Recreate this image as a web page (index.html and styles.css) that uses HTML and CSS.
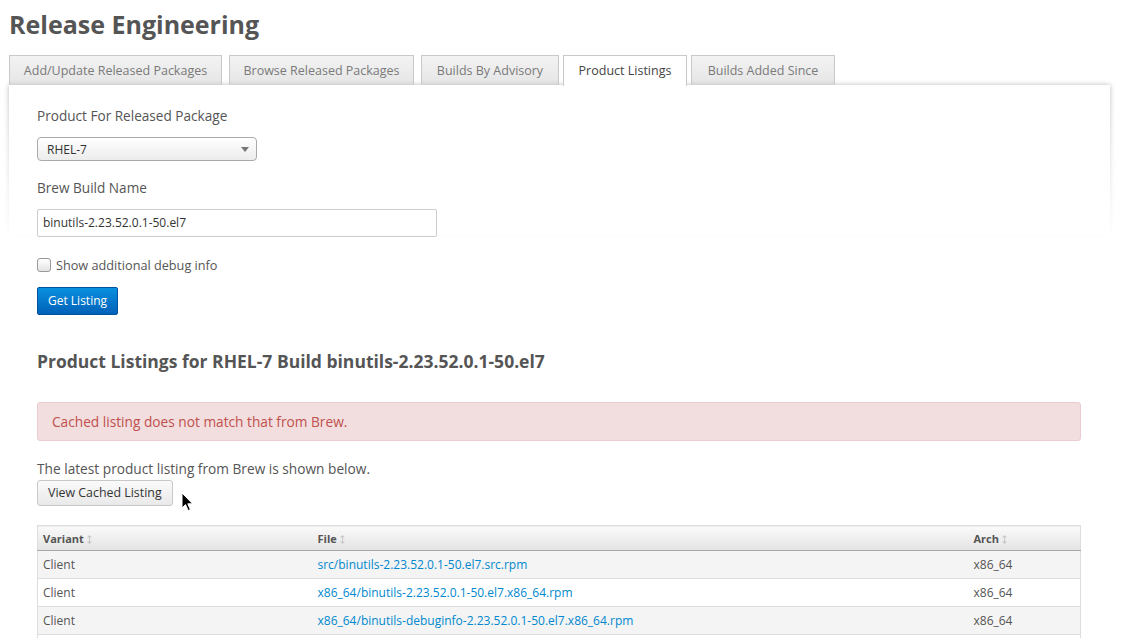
FILE: index.html
```html
<!DOCTYPE html>
<html>
<head>
<meta charset="utf-8">
<link rel="stylesheet" href="styles.css">
</head>
<body>
<div class="page">
  <h1 class="title">Release Engineering</h1>
  <ul class="tabs">
    <li class="tab t1">Add/Update Released Packages</li>
    <li class="tab t2">Browse Released Packages</li>
    <li class="tab t3 tight">Builds By Advisory</li>
    <li class="tab t4 tight active">Product Listings</li>
    <li class="tab t5">Builds Added Since</li>
  </ul>
  <div class="panel">
    <div class="panel-shadow"><div class="panel-shadow-inner"></div></div>
    <div class="panel-body">
      <label class="field-label">Product For Released Package</label>
      <div class="select">
        <span>RHEL-7</span>
        <svg class="caret" width="8" height="5" viewBox="0 0 8 5"><path d="M0 0H8L4 5Z" fill="#777"/></svg>
      </div>
      <label class="field-label">Brew Build Name</label>
      <div class="input">binutils-2.23.52.0.1-50.el7</div>
      <div class="check-row">
        <span class="checkbox"></span>
        <span class="check-label">Show additional debug info</span>
      </div>
      <div class="btn-primary">Get Listing</div>

      <h2 class="section-title">Product Listings for RHEL-7 Build binutils-2.23.52.0.1-50.el7</h2>

      <div class="alert">Cached listing does not match that from Brew.</div>

      <p class="note">The latest product listing from Brew is shown below.</p>
      <div class="btn-wrap">
        <div class="btn-default">View Cached Listing</div>
        <svg class="cursor" width="13" height="20" viewBox="0 0 13 20"><path d="M1 1V16L4.5 12.6L7.2 18.6L9.4 17.6L6.8 11.8H11.6Z" fill="#000" stroke="#fff" stroke-width="1"/></svg>
      </div>

      <table class="listing">
        <thead>
          <tr>
            <th class="c-var">Variant<svg class="sort" width="5" height="9" viewBox="0 0 5 9"><path d="M2.5 0L5 2.5H3V6.5H5L2.5 9L0 6.5H2V2.5H0Z" fill="#c8c8c8"/></svg></th>
            <th class="c-file">File<svg class="sort" width="5" height="9" viewBox="0 0 5 9"><path d="M2.5 0L5 2.5H3V6.5H5L2.5 9L0 6.5H2V2.5H0Z" fill="#c8c8c8"/></svg></th>
            <th class="c-arch">Arch<svg class="sort" width="5" height="9" viewBox="0 0 5 9"><path d="M2.5 0L5 2.5H3V6.5H5L2.5 9L0 6.5H2V2.5H0Z" fill="#c8c8c8"/></svg></th>
          </tr>
        </thead>
        <tbody>
          <tr class="odd"><td>Client</td><td><a>src/binutils-2.23.52.0.1-50.el7.src.rpm</a></td><td>x86_64</td></tr>
          <tr><td>Client</td><td><a>x86_64/binutils-2.23.52.0.1-50.el7.x86_64.rpm</a></td><td>x86_64</td></tr>
          <tr class="odd"><td>Client</td><td><a>x86_64/binutils-debuginfo-2.23.52.0.1-50.el7.x86_64.rpm</a></td><td>x86_64</td></tr>
          <tr><td>Client</td><td><a>x86_64/binutils-devel-2.23.52.0.1-50.el7.x86_64.rpm</a></td><td>x86_64</td></tr>
        </tbody>
      </table>
    </div>
  </div>
</div>
</body>
</html>
```

FILE: styles.css
```css
html, body {
  margin: 0;
  padding: 0;
  background: #fff;
  overflow: hidden;
}
body {
  font-family: "Open Sans", "DejaVu Sans", sans-serif;
  color: #555;
  font-size: 13.6px;
}
.page {
  padding: 0 11px 0 9px;
}
.title {
  margin: 0;
  padding-top: 7px;
  height: 55px;
  line-height: 34px;
  font-size: 25px;
  font-weight: 700;
  color: #555;
  box-sizing: border-box;
}
.tabs {
  list-style: none;
  margin: 0;
  padding: 0;
  display: flex;
  height: 30px;
  position: relative;
  z-index: 2;
}
.tab {
  height: 30px;
  box-sizing: border-box;
  border: 1px solid #c9c9c9;
  border-bottom: none;
  padding: 0;
  text-align: center;
  white-space: nowrap;
  margin-right: 7px;
  line-height: 29px;
  font-size: 12.5px;
  color: #7a7a7a;
  background: linear-gradient(#f3f3f3, #e5e5e5);
  box-shadow: inset 0 -4px 4px -3px rgba(0,0,0,0.12);
}
.t1 { width: 213px; }
.t2 { width: 185px; }
.t3 { width: 138px; }
.t4 { width: 124px; }
.t5 { width: 144px; }
.tab.tight {
  margin-right: 4px;
}
.tab.active {
  background: #fff;
  color: #444;
  box-shadow: none;
  height: 31px;
}
.panel {
  position: relative;
  background: #fff;
}
.panel-shadow {
  position: absolute;
  top: -8px;
  left: -8px;
  right: -8px;
  height: 150px;
  padding: 8px;
  -webkit-mask-image: linear-gradient(#000 10%, transparent);
  mask-image: linear-gradient(#000 10%, transparent);
  z-index: 1;
  pointer-events: none;
}
.panel-shadow-inner {
  height: 100%;
  box-shadow: 0 0 5px rgba(0,0,0,0.28);
}
.panel-body {
  position: relative;
  z-index: 1;
  padding: 22px 29px 0 28px;
}
.field-label {
  display: block;
  font-size: 13.6px;
  line-height: 18px;
  color: #555;
  margin-bottom: 12px;
}
.select {
  width: 220px;
  height: 24px;
  box-sizing: border-box;
  border: 1px solid #aaa;
  border-radius: 4px;
  background: linear-gradient(#fff, #ececec);
  display: flex;
  align-items: center;
  justify-content: space-between;
  padding: 0 7px 0 9px;
  font-size: 12px;
  color: #333;
  margin-bottom: 18px;
}
.caret {
  display: block;
}
.input {
  width: 400px;
  height: 28px;
  box-sizing: border-box;
  border: 1px solid #ccc;
  border-radius: 2px;
  padding: 0 5px;
  line-height: 26px;
  font-size: 12px;
  color: #333;
  margin-bottom: 20px;
}
.check-row {
  display: flex;
  align-items: center;
  gap: 5px;
  height: 16px;
  margin-bottom: 14px;
}
.checkbox {
  width: 12px;
  height: 12px;
  border: 1px solid #999;
  border-radius: 3px;
  background: linear-gradient(#fff, #e4e4e4);
}
.check-label {
  font-size: 12.7px;
  color: #555;
}
.btn-primary {
  display: inline-block;
  height: 28px;
  box-sizing: border-box;
  padding: 0 10px;
  line-height: 26px;
  border: 1px solid #00539b;
  border-radius: 2px;
  background: linear-gradient(#0a8fe0, #0062b8);
  color: #fff;
  font-size: 12px;
}
.section-title {
  margin: 0;
  padding-top: 33px;
  font-size: 17.5px;
  line-height: 26px;
  font-weight: 700;
  color: #555;
}
.alert {
  margin-top: 28px;
  height: 39px;
  box-sizing: border-box;
  background: #f2dede;
  border: 1px solid #ebccd1;
  border-radius: 3px;
  color: #c0504d;
  font-size: 13.7px;
  line-height: 37px;
  padding: 0 14px;
}
.note {
  margin: 18px 0 1px;
  font-size: 13.7px;
  line-height: 20px;
  color: #555;
}
.btn-wrap {
  position: relative;
  height: 26px;
  margin-bottom: 19px;
}
.btn-default {
  display: inline-block;
  height: 26px;
  box-sizing: border-box;
  padding: 0 10px;
  line-height: 24px;
  border: 1px solid #c8c8c8;
  border-radius: 3px;
  background: linear-gradient(#fafafa, #e9e9e9);
  color: #333;
  font-size: 12.4px;
}
.cursor {
  position: absolute;
  left: 144px;
  top: 12px;
}
.listing {
  width: 100%;
  border-collapse: collapse;
  font-size: 12px;
  border: 1px solid #ddd;
}
.listing th {
  text-align: left;
  height: 25px;
  box-sizing: border-box;
  padding: 0 5px;
  font-size: 11px;
  font-weight: 700;
  color: #555;
  background: linear-gradient(#fafafa, #e3e3e3);
  border-bottom: 1px solid #a9a9a9;
}
.sort {
  margin-left: 3px;
  vertical-align: -1px;
}
.c-var { width: 275px; }
.c-arch { width: 112px; }
.listing td {
  height: 28px;
  box-sizing: border-box;
  padding: 0 5px;
  color: #555;
  border-top: 1px solid #ddd;
}
.listing tr.odd td {
  background: #f4f4f4;
}
.listing a {
  color: #0088ce;
  text-decoration: none;
}
```
